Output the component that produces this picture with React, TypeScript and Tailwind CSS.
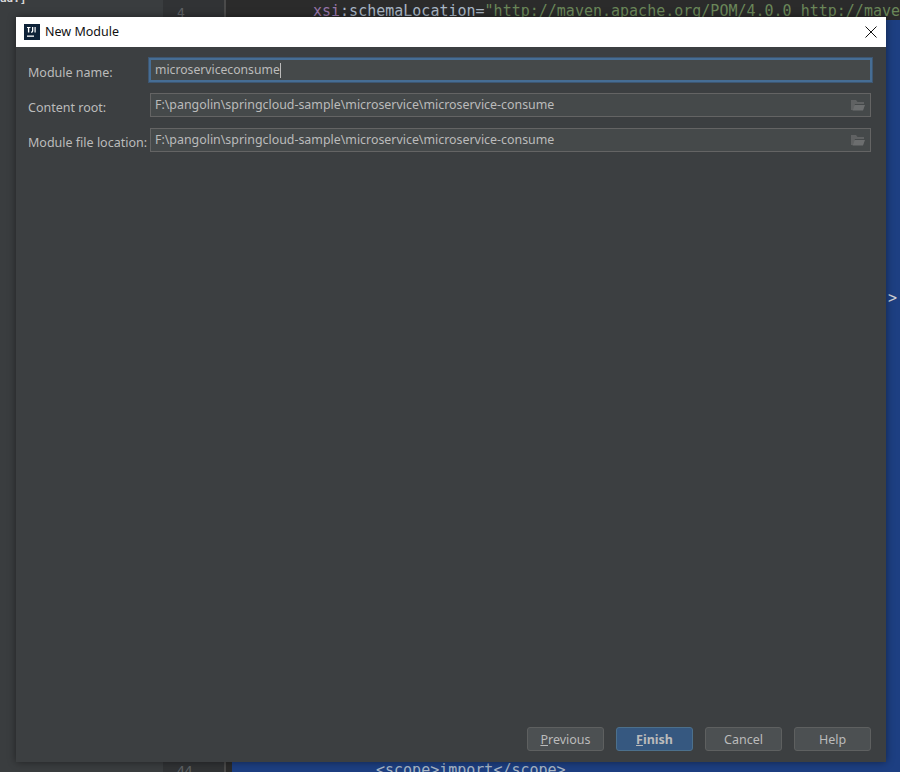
import React from 'react';

function FolderIcon() {
  return (
    <svg width="16" height="13" viewBox="0 0 16 13" className="shrink-0">
      <path d="M1 1h5l1.500 2H14v2H5L3 11H1z" fill="#606263" />
      <path d="M4.500 6H15l-2 5.500H2.500z" fill="#6c6e6f" />
    </svg>
  );
}

function PathField({ value }: { value: string }) {
  return (
    <div className="h-6 flex items-center justify-between pl-[4px] pr-[4px] bg-[#45494a] border border-[#646464]">
      <span className="text-[#bbbbbb] text-[12.4px]">{value}</span>
      <FolderIcon />
    </div>
  );
}

function Button({ children, primary }: { children: React.ReactNode; primary?: boolean }) {
  return (
    <button
      className={
        primary
          ? 'w-[77px] h-6 pt-[2px] rounded-[3px] border border-[#4c708c] bg-[#365880] text-[#bbbbbb] font-bold'
          : 'w-[77px] h-6 pt-[2px] rounded-[3px] border border-[#5e6060] bg-[#4c5052] text-[#bbbbbb]'
      }
    >
      {children}
    </button>
  );
}

export default function App() {
  return (
    <div className="relative w-[900px] h-[772px] overflow-hidden flex bg-[#3c3f41] font-['Noto_Sans',sans-serif] text-[12.5px]">
      {/* IDE behind the dialog */}
      <div className="w-[163px] shrink-0 bg-[#3a3d3f] text-[#d8d8d8] font-bold font-['DejaVu_Sans_Mono',monospace] text-[11px] leading-none">
        <div className="-mt-[7px]">ad.]</div>
      </div>
      <div className="w-[63px] shrink-0 bg-[#313335] border-r-2 border-[#4a4a4a] flex flex-col justify-between pl-[14px] text-[#606366] font-['DejaVu_Sans_Mono',monospace] text-[13px]">
        <span className="mt-[3px]">4</span>
        <span className="mb-[-8px]">44</span>
      </div>
      <div className="flex-1 bg-[#2b2b2b] pl-[87px] font-['DejaVu_Sans_Mono',monospace] text-[15px] whitespace-nowrap">
        <div className="text-[#a9b7c6]">
          <span className="text-[#9876aa]">xsi</span>:schemaLocation=<span className="text-[#6a8759]">"http://maven.apache.org/POM/4.0.0 http://maven</span>
        </div>
      </div>
      <div className="absolute left-[232px] top-[20px] right-0 bottom-0 bg-[#1d3f82] font-['DejaVu_Sans_Mono',monospace] text-[15px] text-[#a9b7c6]">
        <div className="absolute left-[144px] bottom-[-9px]">&lt;scope&gt;import&lt;/scope&gt;</div>
        <div className="absolute right-[3px] top-[267px] text-[#cfd3d8]">&gt;</div>
      </div>

      {/* New Module dialog */}
      <div className="absolute left-[16px] top-[17px] w-[870px] h-[745px] flex flex-col bg-[#3c3f41] shadow-[0_0_8px_rgba(0,0,0,0.45)]">
        <div className="h-[30px] shrink-0 bg-white flex items-center pl-[8px] pr-[9px] text-[#111111]">
          <svg width="16" height="16" viewBox="0 0 16 16" className="shrink-0 mr-[5px]">
            <rect width="16" height="16" fill="#0e2238" />
            <rect x="3" y="11.500" width="7" height="1.300" fill="#ffffff" />
            <path d="M3 3h3.500v1H5.300v4.500H3.900V4H3zM8 3h1.300v4q0 1.700-1.700 1.700H7V7.600h.4Q8 7.600 8 7zM10.500 3h1.200v5.600h-1.200z" fill="#ffffff" />
          </svg>
          <span>New Module</span>
          <svg width="12" height="12" viewBox="0 0 12 12" className="ml-auto">
            <path d="M.5.5l11 11M11.500.5l-11 11" stroke="#111111" strokeWidth="1" fill="none" />
          </svg>
        </div>

        <div className="flex-1 grid grid-cols-[122px_721px] auto-rows-[24px] gap-y-[11px] content-start pl-[12px] pt-[11px] text-[#bbbbbb]">
          <span className="self-center pt-[6px]">Module name:</span>
          <div className="h-6 flex items-center pl-[4px] bg-[#45494a] border-2 border-[#466d94] shadow-[0_0_0_1px_#3d5671] -ml-[1px] -mr-[1px] text-[#bbbbbb] text-[12.2px]">
            <span>microserviceconsume</span>
            <span className="w-px h-[15px] bg-[#bbbbbb]" />
          </div>
          <span className="self-center pt-[6px]">Content root:</span>
          <PathField value="F:\pangolin\springcloud-sample\microservice\microservice-consume" />
          <span className="self-center pt-[6px]">Module file location:</span>
          <PathField value="F:\pangolin\springcloud-sample\microservice\microservice-consume" />
        </div>

        <div className="flex justify-end gap-3 pr-[15px] pb-[11px]">
          <Button><span className="underline">P</span>revious</Button>
          <Button primary><span className="underline">F</span>inish</Button>
          <Button>Cancel</Button>
          <Button>Help</Button>
        </div>
      </div>
    </div>
  );
}
